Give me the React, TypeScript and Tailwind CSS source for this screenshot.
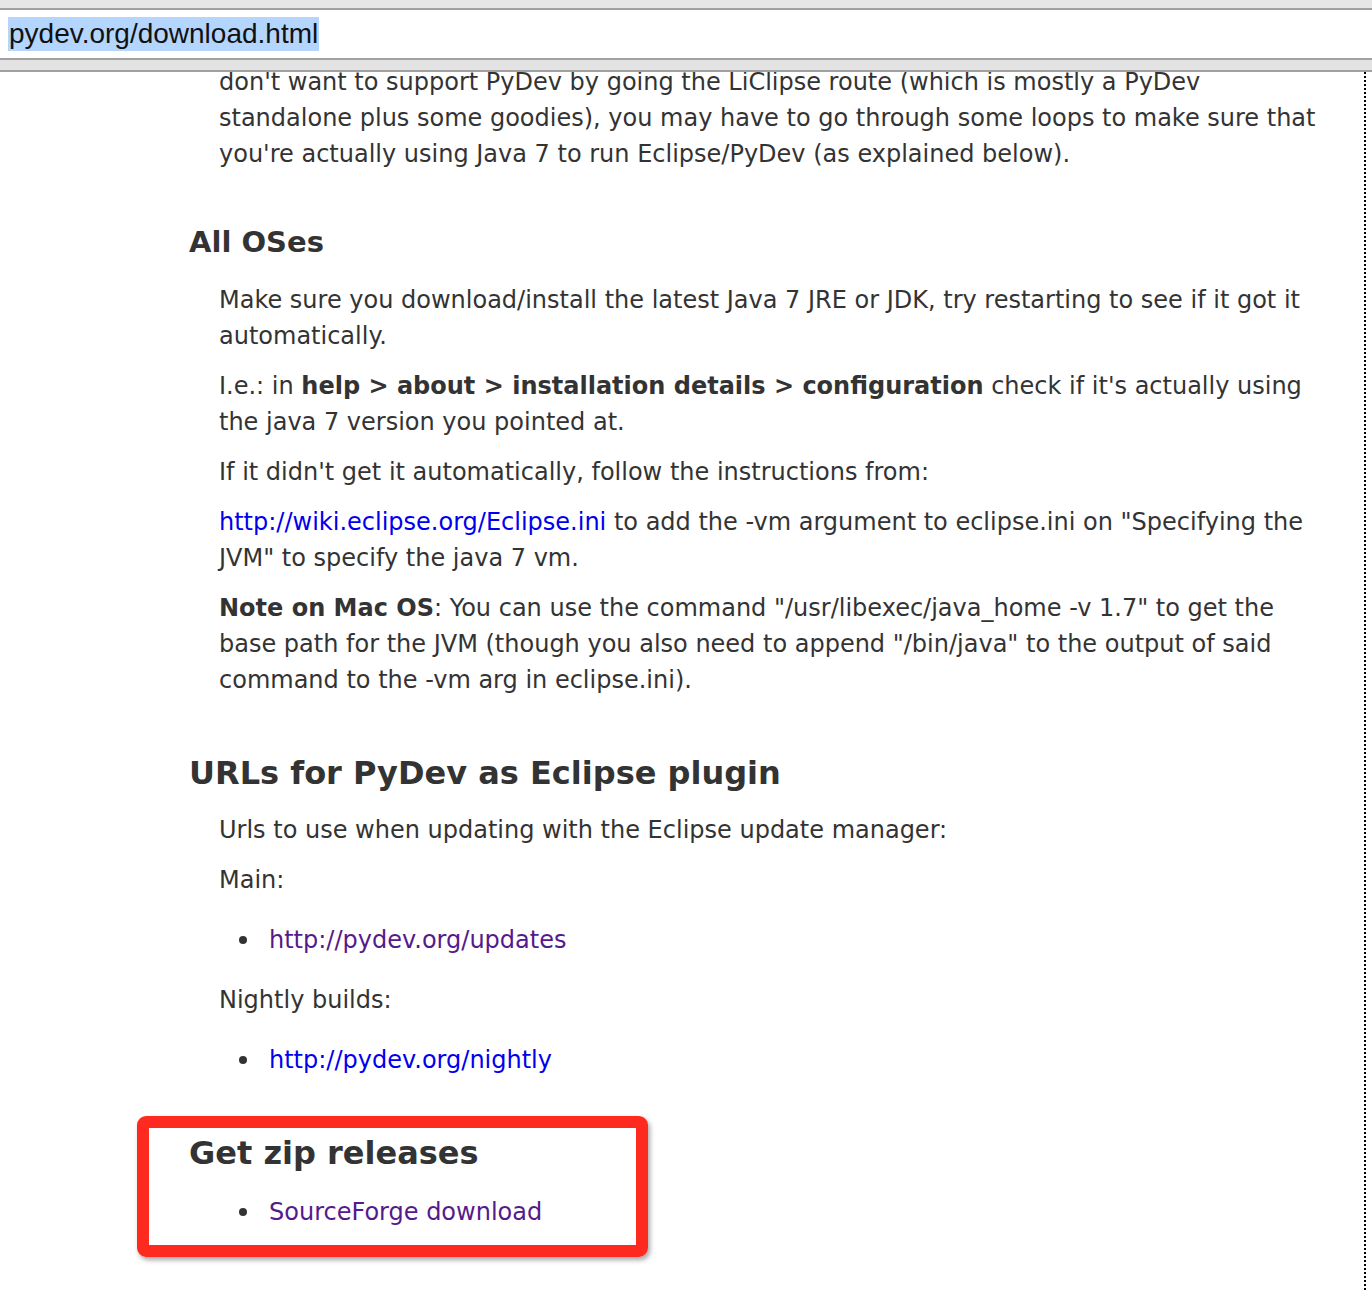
import React from "react";

const body = { fontFamily: '"DejaVu Sans", Verdana, sans-serif' };

function Para({ children }: { children: React.ReactNode }) {
  return <p className="ml-[219px] text-[24px] leading-[36px] text-[#333] whitespace-nowrap">{children}</p>;
}

function Bullet({ href, visited, children }: { href: string; visited?: boolean; children: React.ReactNode }) {
  return (
    <ul className="ml-[219px] mt-[24px] mb-[24px] text-[24px] leading-[36px]">
      <li className="flex items-center">
        <span className="w-[50px] pl-[20px] flex items-center">
          <span className="block w-[8px] h-[8px] rounded-full bg-[#333]" />
        </span>
        <a href={href} className={visited ? "text-[#551a8b]" : "text-[#0000ee]"}>
          {children}
        </a>
      </li>
    </ul>
  );
}

export default function App() {
  return (
    <div className="w-[1372px] h-[1290px] bg-white overflow-hidden relative" style={body}>
      {/* address bar */}
      <div className="h-[72px] bg-[#e6e6e6] flex flex-col">
        <div className="h-[8px]" />
        <div className="h-[2px] bg-[#a0a0a0]" />
        <div className="h-[48px] bg-white flex items-center pl-[8px]">
          <span
            className="bg-[#b4d5fe] text-[#111] text-[28px] leading-[34px] px-[1px]"
            style={{ fontFamily: '"Liberation Sans", Arial, sans-serif' }}
          >
            pydev.org/download.html
          </span>
        </div>
        <div className="h-[2px] bg-[#a0a0a0]" />
        <div className="h-[10px] bg-[#e3e3e3]" />
        <div className="h-[2px] bg-[#a0a0a0]" />
      </div>

      {/* page viewport */}
      <div className="h-[1218px] overflow-hidden border-r-2 border-dotted border-black w-[1366px]">
        <div className="-mt-[8px] flex flex-col gap-[14px]">
          <Para>
            don't want to support PyDev by going the LiClipse route (which is mostly a PyDev
            <br />
            standalone plus some goodies), you may have to go through some loops to make sure that
            <br />
            you're actually using Java 7 to run Eclipse/PyDev (as explained below).
          </Para>

          <h3 className="ml-[189px] mt-[38px] mb-[8px] text-[29px] leading-[36px] font-bold text-[#333]">All OSes</h3>

          <Para>
            Make sure you download/install the latest Java 7 JRE or JDK, try restarting to see if it got it
            <br />
            automatically.
          </Para>
          <Para>
            I.e.: in <b>help &gt; about &gt; installation details &gt; configuration</b> check if it's actually using
            <br />
            the java 7 version you pointed at.
          </Para>
          <Para>If it didn't get it automatically, follow the instructions from:</Para>
          <Para>
            <a href="#" className="text-[#0000ee]">http://wiki.eclipse.org/Eclipse.ini</a> to add the -vm argument to eclipse.ini on "Specifying the
            <br />
            JVM" to specify the java 7 vm.
          </Para>
          <Para>
            <b>Note on Mac OS</b>: You can use the command "/usr/libexec/java_home -v 1.7" to get the
            <br />
            base path for the JVM (though you also need to append "/bin/java" to the output of said
            <br />
            command to the -vm arg in eclipse.ini).
          </Para>

          <h2 className="ml-[189px] mt-[41px] mb-[5px] text-[32px] leading-[40px] font-bold text-[#333]">
            URLs for PyDev as Eclipse plugin
          </h2>
          <Para>Urls to use when updating with the Eclipse update manager:</Para>
          <div>
            <Para>Main:</Para>
            <Bullet href="#" visited>http://pydev.org/updates</Bullet>
            <Para>Nightly builds:</Para>
            <Bullet href="#">http://pydev.org/nightly</Bullet>
          </div>

          <h2 className="ml-[189px] mt-[17px] text-[32px] leading-[40px] font-bold text-[#333]">Get zip releases</h2>
          <div className="-mt-[17px]">
            <Bullet href="#" visited>SourceForge download</Bullet>
          </div>
        </div>
      </div>

      {/* red annotation box */}
      <div className="absolute left-[137px] top-[1116px] w-[511px] h-[141px] border-[12px] border-[#ff2a1f] rounded-[9px] shadow-[2px_3px_5px_rgba(0,0,0,0.35)]" />
    </div>
  );
}
